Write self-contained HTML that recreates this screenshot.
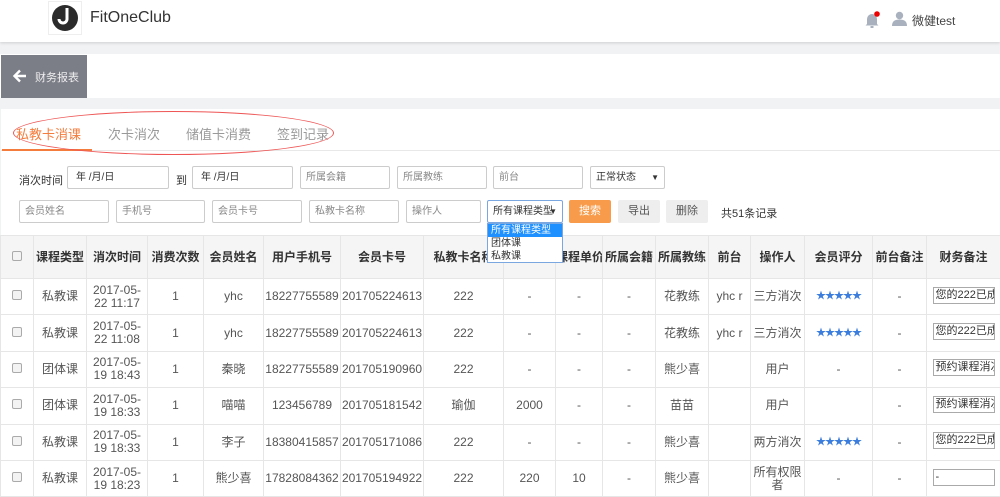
<!DOCTYPE html>
<html><head><meta charset="utf-8"><style>
*{box-sizing:border-box;margin:0;padding:0}
body{width:1000px;height:493px;overflow:hidden;background:#f1f2f4;font-family:"Liberation Sans","Noto Sans CJK SC",sans-serif;color:#333;position:relative;font-size:12px}
.a{position:absolute}
.hdr{left:0;top:0;width:1000px;height:42px;background:#fff;box-shadow:0 1px 3px rgba(0,0,0,.15)}
.inp{position:absolute;height:23px;border:1px solid #ccc;border-radius:2px;background:#fff;font-size:10px;color:#888;line-height:21px;padding-left:5px}
.btn{position:absolute;height:23px;line-height:23px;text-align:center;font-size:11px;border-radius:2px}
table{position:absolute;left:0;top:235px;border-collapse:collapse;table-layout:fixed;width:1000px;background:#fff}
td,th{border:1px solid #e6e6e6;text-align:center;font-size:12px;color:#555;overflow:hidden;white-space:nowrap;line-height:13px}
th{background:#f5f5f5;height:43px;font-weight:bold;color:#333}
td{height:36.4px}
.cb{display:inline-block;width:10px;height:10px;border:1px solid #aaa;border-radius:2px;background:#f3f3f3}
.st{color:#3b7ddd;font-size:10px;letter-spacing:-1px}
.nt{display:inline-block;width:62px;height:17px;border:1px solid #aaa;font-size:11px;line-height:15px;text-align:left;padding-left:2px;overflow:hidden;color:#333}
</style></head><body>
<div class="a hdr">
 <div class="a" style="left:48px;top:1px;width:34px;height:34px;border:1px solid #eee;background:#fff">
  <svg width="34" height="34" viewBox="0 0 34 34" style="position:absolute;left:-1px;top:-1px"><circle cx="17" cy="17" r="13" fill="#2b2b2b"/><path d="M19 7v11a4 4 0 0 1-8 0" stroke="#fff" stroke-width="3" fill="none"/></svg>
 </div>
 <div class="a" style="left:90px;top:9px;font-size:16px;color:#333">FitOneClub</div>
 <svg class="a" style="left:864px;top:11px" width="16" height="18" viewBox="0 0 16 18"><path d="M3 13V8a5 5 0 0 1 10 0v5l1.5 1.5h-13z" fill="#a9b1bf"/><rect x="6.5" y="15" width="3" height="2" fill="#a9b1bf"/><circle cx="13" cy="3" r="2.8" fill="#e00"/></svg>
 <svg class="a" style="left:892px;top:11px" width="15" height="15" viewBox="0 0 15 15"><circle cx="7.5" cy="4.5" r="3.7" fill="#a9b1bf"/><path d="M0 15c0-5 3-6.5 7.5-6.5S15 10 15 15z" fill="#a9b1bf"/></svg>
 <div class="a" style="left:912px;top:12px;font-size:12px;color:#444">微健test</div>
</div>
<div class="a" style="left:0;top:54px;width:1000px;height:44px;background:#fff"></div>
<div class="a" style="left:1px;top:55px;width:86px;height:43px;background:#7b7d87;color:#eee;font-size:11px">
 <svg class="a" style="left:11px;top:13px" width="16" height="16" viewBox="0 0 16 16"><path d="M14 8H3M8 2.5L2.5 8 8 13.5" stroke="#fff" stroke-width="2.4" fill="none"/></svg>
 <span class="a" style="left:34px;top:14px">财务报表</span>
</div>
<div class="a" style="left:1px;top:109px;width:999px;height:384px;background:#fff"></div>
<div class="a" style="left:1px;top:150px;width:999px;height:1px;background:#e8e8e8"></div>
<div class="a" style="left:2px;top:149px;width:90px;height:2px;background:#f47c3c"></div>
<div class="a" style="left:16px;top:124px;font-size:13px;color:#f47c3c">私教卡消课</div>
<div class="a" style="left:108px;top:124px;font-size:13px;color:#999">次卡消次</div>
<div class="a" style="left:186px;top:124px;font-size:13px;color:#999">储值卡消费</div>
<div class="a" style="left:277px;top:124px;font-size:13px;color:#999">签到记录</div>
<div class="a" style="left:13px;top:111px;width:321px;height:44px;border:1px solid #e55;border-radius:50%"></div>

<div class="a" style="left:19px;top:172px;font-size:11px">消次时间</div>
<div class="inp" style="left:67px;top:166px;width:102px;color:#333;padding-left:8px">年 /月/日</div>
<div class="a" style="left:176px;top:172px;font-size:11px">到</div>
<div class="inp" style="left:192px;top:166px;width:101px;color:#333;padding-left:8px">年 /月/日</div>
<div class="inp" style="left:300px;top:166px;width:90px">所属会籍</div>
<div class="inp" style="left:397px;top:166px;width:90px">所属教练</div>
<div class="inp" style="left:493px;top:166px;width:90px">前台</div>
<div class="inp" style="left:590px;top:166px;width:75px;color:#333">正常状态<span class="a" style="right:5px;top:0;font-size:8px">▼</span></div>

<div class="inp" style="left:19px;top:200px;width:90px">会员姓名</div>
<div class="inp" style="left:116px;top:200px;width:89px">手机号</div>
<div class="inp" style="left:212px;top:200px;width:90px">会员卡号</div>
<div class="inp" style="left:309px;top:200px;width:90px">私教卡名称</div>
<div class="inp" style="left:406px;top:200px;width:75px">操作人</div>
<div class="inp" style="left:487px;top:200px;width:76px;color:#333;border-color:#7aa7e0">所有课程类型<span class="a" style="right:5px;top:0;font-size:8px">▼</span></div>
<div class="btn" style="left:569px;top:200px;width:42px;background:#f89b4a;color:#fff">搜索</div>
<div class="btn" style="left:618px;top:200px;width:42px;background:#eee;color:#555">导出</div>
<div class="btn" style="left:666px;top:200px;width:42px;background:#eee;color:#555">删除</div>
<div class="a" style="left:721px;top:205px;font-size:11px">共51条记录</div>

<table>
<colgroup><col style="width:33px"><col style="width:53px"><col style="width:61px"><col style="width:56px"><col style="width:60px"><col style="width:77px"><col style="width:83px"><col style="width:80px"><col style="width:52px"><col style="width:47px"><col style="width:53px"><col style="width:53px"><col style="width:42px"><col style="width:54px"><col style="width:68px"><col style="width:54px"><col style="width:74px"></colgroup>
<tr><th><span class="cb"></span></th><th>课程类型</th><th>消次时间</th><th>消费次数</th><th>会员姓名</th><th>用户手机号</th><th>会员卡号</th><th>私教卡名称</th><th>课程</th><th>课程单价</th><th>所属会籍</th><th>所属教练</th><th>前台</th><th>操作人</th><th>会员评分</th><th>前台备注</th><th>财务备注</th></tr>
<tr><td><span class="cb"></span></td><td>私教课</td><td>2017-05-<br>22 11:17</td><td>1</td><td>yhc</td><td>18227755589</td><td>201705224613</td><td>222</td><td>-</td><td>-</td><td>-</td><td>花教练</td><td>yhc r</td><td>三方消次</td><td class="st">★★★★★</td><td>-</td><td><span class="nt">您的222已成</span></td></tr>
<tr><td><span class="cb"></span></td><td>私教课</td><td>2017-05-<br>22 11:08</td><td>1</td><td>yhc</td><td>18227755589</td><td>201705224613</td><td>222</td><td>-</td><td>-</td><td>-</td><td>花教练</td><td>yhc r</td><td>三方消次</td><td class="st">★★★★★</td><td>-</td><td><span class="nt">您的222已成</span></td></tr>
<tr><td><span class="cb"></span></td><td>团体课</td><td>2017-05-<br>19 18:43</td><td>1</td><td>秦晓</td><td>18227755589</td><td>201705190960</td><td>222</td><td>-</td><td>-</td><td>-</td><td>熊少喜</td><td></td><td>用户</td><td>-</td><td>-</td><td><span class="nt">预约课程消次</span></td></tr>
<tr><td><span class="cb"></span></td><td>团体课</td><td>2017-05-<br>19 18:33</td><td>1</td><td>喵喵</td><td>123456789</td><td>201705181542</td><td>瑜伽</td><td>2000</td><td>-</td><td>-</td><td>苗苗</td><td></td><td>用户</td><td></td><td>-</td><td><span class="nt">预约课程消次</span></td></tr>
<tr><td><span class="cb"></span></td><td>私教课</td><td>2017-05-<br>19 18:33</td><td>1</td><td>李子</td><td>18380415857</td><td>201705171086</td><td>222</td><td>-</td><td>-</td><td>-</td><td>熊少喜</td><td></td><td>两方消次</td><td class="st">★★★★★</td><td>-</td><td><span class="nt">您的222已成</span></td></tr>
<tr><td><span class="cb"></span></td><td>私教课</td><td>2017-05-<br>19 18:23</td><td>1</td><td>熊少喜</td><td>17828084362</td><td>201705194922</td><td>222</td><td>220</td><td>10</td><td>-</td><td>熊少喜</td><td></td><td>所有权限<br>者</td><td>-</td><td>-</td><td><span class="nt">-</span></td></tr>
</table>

<div class="a" style="left:487px;top:223px;width:76px;height:40px;background:#fff;border:1px solid #7aa7e0;font-size:10px;line-height:13px">
 <div style="background:#1e90ff;color:#fff;padding-left:3px">所有课程类型</div>
 <div style="padding-left:3px">团体课</div>
 <div style="padding-left:3px">私教课</div>
</div>
</body></html>
